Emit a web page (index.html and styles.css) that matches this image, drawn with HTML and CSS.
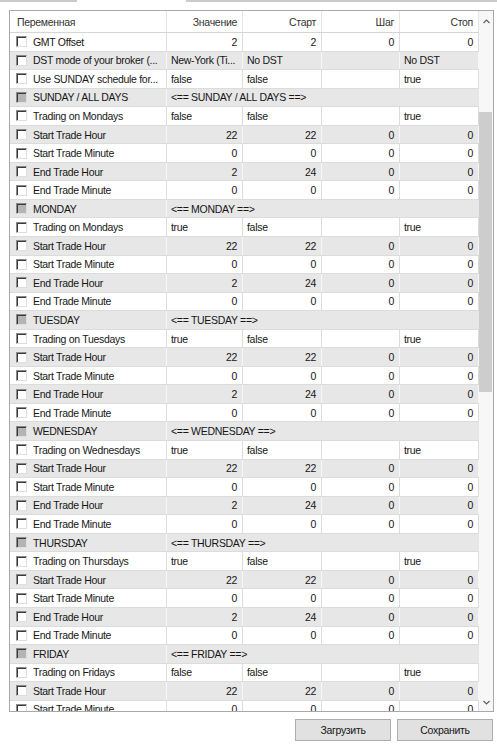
FILE: index.html
```html
<!DOCTYPE html>
<html lang="ru">
<head>
    <meta charset="UTF-8">
    <meta name="viewport" content="width=device-width, initial-scale=1.0">
    <title>Входные параметры</title>
    <link rel="stylesheet" href="styles.css">
</head>
<body>
    <div class="tab-edge">
        <span class="line left"></span>
        <span class="gap"></span>
        <span class="line right"></span>
    </div>

    <div class="inputs">
        <div class="grid">
            <div class="row head">
                <div class="cell name">Переменная</div>
                <div class="cell num">Значение</div>
                <div class="cell num">Старт</div>
                <div class="cell num">Шаг</div>
                <div class="cell num">Стоп</div>
            </div>

            <div class="row">
                <div class="cell name"><span class="check"></span>GMT Offset</div>
                <div class="cell num">2</div><div class="cell num">2</div><div class="cell num">0</div><div class="cell num">0</div>
            </div>
            <div class="row">
                <div class="cell name"><span class="check"></span>DST mode of your broker (...</div>
                <div class="cell">New-York (Ti...</div><div class="cell">No DST</div><div class="cell"></div><div class="cell">No DST</div>
            </div>
            <div class="row">
                <div class="cell name"><span class="check"></span>Use SUNDAY schedule for...</div>
                <div class="cell">false</div><div class="cell">false</div><div class="cell"></div><div class="cell">true</div>
            </div>

            <!-- SUNDAY / ALL DAYS -->
            <div class="row group">
                <div class="cell name"><span class="check off"></span>SUNDAY / ALL DAYS</div>
                <div class="cell">&lt;== SUNDAY / ALL DAYS ==&gt;</div>
            </div>
            <div class="row">
                <div class="cell name"><span class="check"></span>Trading on Mondays</div>
                <div class="cell">false</div><div class="cell">false</div><div class="cell"></div><div class="cell">true</div>
            </div>
            <div class="row">
                <div class="cell name"><span class="check"></span>Start Trade Hour</div>
                <div class="cell num">22</div><div class="cell num">22</div><div class="cell num">0</div><div class="cell num">0</div>
            </div>
            <div class="row">
                <div class="cell name"><span class="check"></span>Start Trade Minute</div>
                <div class="cell num">0</div><div class="cell num">0</div><div class="cell num">0</div><div class="cell num">0</div>
            </div>
            <div class="row">
                <div class="cell name"><span class="check"></span>End Trade Hour</div>
                <div class="cell num">2</div><div class="cell num">24</div><div class="cell num">0</div><div class="cell num">0</div>
            </div>
            <div class="row">
                <div class="cell name"><span class="check"></span>End Trade Minute</div>
                <div class="cell num">0</div><div class="cell num">0</div><div class="cell num">0</div><div class="cell num">0</div>
            </div>

            <!-- MONDAY -->
            <div class="row group">
                <div class="cell name"><span class="check off"></span>MONDAY</div>
                <div class="cell">&lt;== MONDAY ==&gt;</div>
            </div>
            <div class="row">
                <div class="cell name"><span class="check"></span>Trading on Mondays</div>
                <div class="cell">true</div><div class="cell">false</div><div class="cell"></div><div class="cell">true</div>
            </div>
            <div class="row">
                <div class="cell name"><span class="check"></span>Start Trade Hour</div>
                <div class="cell num">22</div><div class="cell num">22</div><div class="cell num">0</div><div class="cell num">0</div>
            </div>
            <div class="row">
                <div class="cell name"><span class="check"></span>Start Trade Minute</div>
                <div class="cell num">0</div><div class="cell num">0</div><div class="cell num">0</div><div class="cell num">0</div>
            </div>
            <div class="row">
                <div class="cell name"><span class="check"></span>End Trade Hour</div>
                <div class="cell num">2</div><div class="cell num">24</div><div class="cell num">0</div><div class="cell num">0</div>
            </div>
            <div class="row">
                <div class="cell name"><span class="check"></span>End Trade Minute</div>
                <div class="cell num">0</div><div class="cell num">0</div><div class="cell num">0</div><div class="cell num">0</div>
            </div>

            <!-- TUESDAY -->
            <div class="row group">
                <div class="cell name"><span class="check off"></span>TUESDAY</div>
                <div class="cell">&lt;== TUESDAY ==&gt;</div>
            </div>
            <div class="row">
                <div class="cell name"><span class="check"></span>Trading on Tuesdays</div>
                <div class="cell">true</div><div class="cell">false</div><div class="cell"></div><div class="cell">true</div>
            </div>
            <div class="row">
                <div class="cell name"><span class="check"></span>Start Trade Hour</div>
                <div class="cell num">22</div><div class="cell num">22</div><div class="cell num">0</div><div class="cell num">0</div>
            </div>
            <div class="row">
                <div class="cell name"><span class="check"></span>Start Trade Minute</div>
                <div class="cell num">0</div><div class="cell num">0</div><div class="cell num">0</div><div class="cell num">0</div>
            </div>
            <div class="row">
                <div class="cell name"><span class="check"></span>End Trade Hour</div>
                <div class="cell num">2</div><div class="cell num">24</div><div class="cell num">0</div><div class="cell num">0</div>
            </div>
            <div class="row">
                <div class="cell name"><span class="check"></span>End Trade Minute</div>
                <div class="cell num">0</div><div class="cell num">0</div><div class="cell num">0</div><div class="cell num">0</div>
            </div>

            <!-- WEDNESDAY -->
            <div class="row group">
                <div class="cell name"><span class="check off"></span>WEDNESDAY</div>
                <div class="cell">&lt;== WEDNESDAY ==&gt;</div>
            </div>
            <div class="row">
                <div class="cell name"><span class="check"></span>Trading on Wednesdays</div>
                <div class="cell">true</div><div class="cell">false</div><div class="cell"></div><div class="cell">true</div>
            </div>
            <div class="row">
                <div class="cell name"><span class="check"></span>Start Trade Hour</div>
                <div class="cell num">22</div><div class="cell num">22</div><div class="cell num">0</div><div class="cell num">0</div>
            </div>
            <div class="row">
                <div class="cell name"><span class="check"></span>Start Trade Minute</div>
                <div class="cell num">0</div><div class="cell num">0</div><div class="cell num">0</div><div class="cell num">0</div>
            </div>
            <div class="row">
                <div class="cell name"><span class="check"></span>End Trade Hour</div>
                <div class="cell num">2</div><div class="cell num">24</div><div class="cell num">0</div><div class="cell num">0</div>
            </div>
            <div class="row">
                <div class="cell name"><span class="check"></span>End Trade Minute</div>
                <div class="cell num">0</div><div class="cell num">0</div><div class="cell num">0</div><div class="cell num">0</div>
            </div>

            <!-- THURSDAY -->
            <div class="row group">
                <div class="cell name"><span class="check off"></span>THURSDAY</div>
                <div class="cell">&lt;== THURSDAY ==&gt;</div>
            </div>
            <div class="row">
                <div class="cell name"><span class="check"></span>Trading on Thursdays</div>
                <div class="cell">true</div><div class="cell">false</div><div class="cell"></div><div class="cell">true</div>
            </div>
            <div class="row">
                <div class="cell name"><span class="check"></span>Start Trade Hour</div>
                <div class="cell num">22</div><div class="cell num">22</div><div class="cell num">0</div><div class="cell num">0</div>
            </div>
            <div class="row">
                <div class="cell name"><span class="check"></span>Start Trade Minute</div>
                <div class="cell num">0</div><div class="cell num">0</div><div class="cell num">0</div><div class="cell num">0</div>
            </div>
            <div class="row">
                <div class="cell name"><span class="check"></span>End Trade Hour</div>
                <div class="cell num">2</div><div class="cell num">24</div><div class="cell num">0</div><div class="cell num">0</div>
            </div>
            <div class="row">
                <div class="cell name"><span class="check"></span>End Trade Minute</div>
                <div class="cell num">0</div><div class="cell num">0</div><div class="cell num">0</div><div class="cell num">0</div>
            </div>

            <!-- FRIDAY -->
            <div class="row group">
                <div class="cell name"><span class="check off"></span>FRIDAY</div>
                <div class="cell">&lt;== FRIDAY ==&gt;</div>
            </div>
            <div class="row">
                <div class="cell name"><span class="check"></span>Trading on Fridays</div>
                <div class="cell">false</div><div class="cell">false</div><div class="cell"></div><div class="cell">true</div>
            </div>
            <div class="row">
                <div class="cell name"><span class="check"></span>Start Trade Hour</div>
                <div class="cell num">22</div><div class="cell num">22</div><div class="cell num">0</div><div class="cell num">0</div>
            </div>
            <div class="row">
                <div class="cell name"><span class="check"></span>Start Trade Minute</div>
                <div class="cell num">0</div><div class="cell num">0</div><div class="cell num">0</div><div class="cell num">0</div>
            </div>
        </div>

        <div class="scrollbar">
            <div class="arrow up">
                <svg width="7" height="5" viewBox="0 0 7 5"><polyline points="0.5,4 3.5,1 6.5,4" fill="none" stroke="#606060" stroke-width="1.2"/></svg>
            </div>
            <div class="track"><div class="thumb"></div></div>
            <div class="arrow down">
                <svg width="7" height="5" viewBox="0 0 7 5"><polyline points="0.5,1 3.5,4 6.5,1" fill="none" stroke="#606060" stroke-width="1.2"/></svg>
            </div>
        </div>
    </div>

    <div class="buttons">
        <button>Загрузить</button>
        <button>Сохранить</button>
    </div>
</body>
</html>
```

FILE: styles.css
```css
body {
    margin: 0;
    background-color: #fff;
    font-family: "Liberation Sans", Arial, sans-serif;
    font-size: 10.5px;
    letter-spacing: -0.3px;
    color: #161616;
}

/* edge of the tab strip above the list */
.tab-edge {
    display: flex;
    height: 2px;
}
.tab-edge .line {
    background-color: #cbcbcb;
}
.tab-edge .left {
    width: 77px;
}
.tab-edge .gap {
    width: 109px;
}
.tab-edge .right {
    flex: 1;
}

.inputs {
    display: flex;
    margin: 8px 0 0 9px;
    width: 483px;
    height: 700px;
    border: 1px solid #a9a9a9;
}
.grid {
    width: 469px;
    overflow: hidden;
}

.row {
    display: grid;
    grid-template-columns: 157px 76px 79px 78px 79px;
    height: 18.55px;
    box-sizing: border-box;
    border-bottom: 1px solid #dcdcdc;
}
.row:nth-child(odd) {
    background-color: #e7e7e7;
}
.row.head {
    height: 22px;
    background-color: #fff;
    color: #333;
    border-bottom-color: #d5d5d5;
}
.row.group {
    grid-template-columns: 157px 1fr;
}

.cell {
    display: flex;
    align-items: center;
    padding: 0 4px;
    border-right: 1px solid #dcdcdc;
    white-space: nowrap;
    overflow: hidden;
}
.row:nth-child(odd) .cell {
    border-right-color: #f6f6f6;
}
.row.head .cell {
    border-right-color: #e6e6e6;
}
.row.group .cell:last-child {
    border-right: none;
}
.cell.num {
    justify-content: flex-end;
    padding-right: 5px;
}
.cell.name {
    padding-left: 6px;
}
.row.head .cell.name {
    padding-left: 7px;
}

.check {
    width: 11px;
    height: 11px;
    margin-right: 6px;
    flex-shrink: 0;
    box-sizing: border-box;
    background-color: #fff;
    border-top: 1px solid #8a8a8a;
    border-left: 1px solid #8a8a8a;
    border-right: 1px solid #dedede;
    border-bottom: 1px solid #dedede;
    box-shadow: inset 1px 1px 0 #3a3a3a;
}
.check.off {
    background-color: #b4b4b4;
}

.scrollbar {
    display: flex;
    flex-direction: column;
    width: 14px;
    background-color: #f7f7f7;
}
.scrollbar .arrow {
    height: 17px;
    display: flex;
    align-items: center;
    justify-content: center;
}
.scrollbar .arrow.up {
    padding-top: 3px;
    height: 14px;
}
.scrollbar .track {
    flex: 1;
    padding-top: 84px;
}
.scrollbar .thumb {
    height: 280px;
    margin-right: 1px;
    background-color: #cdcdcd;
}

.buttons {
    display: flex;
    justify-content: flex-end;
    gap: 6px;
    margin: 7px 4px 0 0;
}
button {
    width: 96px;
    height: 22px;
    padding: 0;
    border: 1px solid #adadad;
    background-color: #e1e1e1;
    font-family: "Liberation Sans", Arial, sans-serif;
    font-size: 10.5px;
    letter-spacing: -0.3px;
    color: #161616;
}
```
